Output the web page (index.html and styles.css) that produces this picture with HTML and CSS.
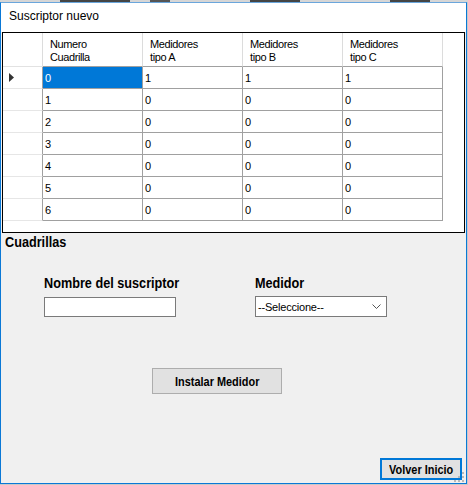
FILE: index.html
```html
<!DOCTYPE html>
<html lang="es">
<head>
<meta charset="utf-8">
<title>Suscriptor nuevo</title>
<link rel="stylesheet" href="styles.css">
</head>
<body>
<div class="topstrip"></div>
<div class="window">
  <div class="titlebar">Suscriptor nuevo</div>
  <div class="grid">
    <div class="dgv">
      <div class="hc corner"></div>
      <div class="hc">Numero<br>Cuadrilla</div>
      <div class="hc">Medidores<br>tipo A</div>
      <div class="hc">Medidores<br>tipo B</div>
      <div class="hc">Medidores<br>tipo C</div>

      <div class="rh"><svg class="arrow" width="6" height="9" viewBox="0 0 6 9"><polygon points="0,0 5,4.5 0,9" fill="#333"/></svg></div>
      <div class="c sel">0</div><div class="c">1</div><div class="c">1</div><div class="c">1</div>

      <div class="rh"></div>
      <div class="c">1</div><div class="c">0</div><div class="c">0</div><div class="c">0</div>

      <div class="rh"></div>
      <div class="c">2</div><div class="c">0</div><div class="c">0</div><div class="c">0</div>

      <div class="rh"></div>
      <div class="c">3</div><div class="c">0</div><div class="c">0</div><div class="c">0</div>

      <div class="rh"></div>
      <div class="c">4</div><div class="c">0</div><div class="c">0</div><div class="c">0</div>

      <div class="rh"></div>
      <div class="c">5</div><div class="c">0</div><div class="c">0</div><div class="c">0</div>

      <div class="rh"></div>
      <div class="c">6</div><div class="c">0</div><div class="c">0</div><div class="c">0</div>
    </div>
  </div>
  <div class="form">
    <div class="section-title"><span class="cond">Cuadrillas</span></div>
    <div class="fields">
      <div class="field">
        <div class="field-label"><span class="cond">Nombre del suscriptor</span></div>
        <div class="textbox"></div>
      </div>
      <div class="field">
        <div class="field-label"><span class="cond">Medidor</span></div>
        <div class="select">
          <span>--Seleccione--</span>
          <svg class="chev" width="9" height="6" viewBox="0 0 9 6"><polyline points="0.5,0.5 4.5,4.5 8.5,0.5" fill="none" stroke="#555" stroke-width="1"/></svg>
        </div>
      </div>
    </div>
    <div class="actions">
      <div class="btn install"><span class="cond-c">Instalar Medidor</span></div>
    </div>
    <div class="footer">
      <div class="btn volver"><span class="cond-c">Volver Inicio</span></div>
    </div>
    <svg class="grip" width="12" height="12" viewBox="0 0 12 12">
      <rect x="9" y="1" width="2" height="2" fill="#b8b8b8"/>
      <rect x="5" y="5" width="2" height="2" fill="#b8b8b8"/>
      <rect x="9" y="5" width="2" height="2" fill="#b8b8b8"/>
      <rect x="1" y="9" width="2" height="2" fill="#b8b8b8"/>
      <rect x="5" y="9" width="2" height="2" fill="#b8b8b8"/>
      <rect x="9" y="9" width="2" height="2" fill="#b8b8b8"/>
    </svg>
  </div>
</div>
</body>
</html>
```
FILE: styles.css
```css
* { box-sizing: border-box; }

html, body {
  margin: 0;
  padding: 0;
}

body {
  width: 468px;
  height: 485px;
  overflow: hidden;
  background: #c9c9c9;
}

.topstrip {
  height: 2px;
  background:
    linear-gradient(90deg, transparent 0 60px, #444 60px 130px, transparent 130px 150px, #555 150px 170px, transparent 170px 250px, #444 250px 300px, transparent 300px 390px, #444 390px 430px, transparent 430px),
    #d6d6d6;
}

.window {
  width: 467px;
  height: 482px;
  border: 1px solid #0a78d6;
  border-top-color: #6aa6dc;
  background: #f0f0f0;
  display: flex;
  flex-direction: column;
}

.titlebar {
  height: 29px;
  flex: none;
  background: #fff;
  padding: 0 0 2px 8px;
  font-family: "Liberation Sans", Arial, sans-serif;
  font-size: 12px;
  line-height: 27px;
  color: #000;
}

.grid {
  flex: none;
  margin-left: 1px;
  width: 463px;
  height: 201px;
  border: 1px solid #000;
  background: #fff;
}

.dgv {
  display: grid;
  grid-template-columns: 40px repeat(4, 100px);
  grid-template-rows: 34px repeat(7, 22px);
  font-family: "Liberation Sans", Arial, sans-serif;
  font-size: 11px;
  letter-spacing: -0.4px;
  color: #000;
}

.hc {
  background: #fff;
  border-right: 1px solid #dcdcdc;
  border-bottom: 1px solid #a0a0a0;
  padding: 5px 0 0 7px;
  line-height: 13px;
}

.hc.corner {
  border-bottom-color: #e2e2e2;
}

.rh {
  background: #fff;
  border-right: 1px solid #a0a0a0;
  border-bottom: 1px solid #e6e6e6;
  display: flex;
  align-items: center;
  padding-left: 6px;
}

.arrow { display: block; }

.c {
  border-right: 1px solid #a0a0a0;
  border-bottom: 1px solid #a0a0a0;
  padding: 1px 0 0 2px;
  line-height: 20px;
}

.c.sel {
  background: #0078d7;
  color: #fff;
}

.form {
  flex: 1;
  position: relative;
  display: flex;
  flex-direction: column;
  align-items: flex-start;
  padding: 1px 4px 3px 4px;
}

.section-title,
.field-label {
  font-family: "Liberation Sans", Arial, sans-serif;
  font-weight: bold;
  font-size: 15px;
  line-height: 16px;
  color: #000;
  white-space: nowrap;
}

.cond {
  display: inline-block;
  transform: scaleX(0.845);
  transform-origin: 0 50%;
}

.cond-c {
  display: inline-block;
  transform: scaleX(0.84);
  transform-origin: 50% 50%;
  white-space: nowrap;
}

.fields {
  display: grid;
  grid-template-columns: 211px 132px;
  margin: 25px 0 0 39px;
}

.textbox {
  margin-top: 6px;
  width: 132px;
  height: 20px;
  border: 1px solid #7a7a7a;
  background: #fff;
}

.select {
  margin-top: 5px;
  width: 132px;
  height: 21px;
  border: 1px solid #7a7a7a;
  background: #fff;
  display: flex;
  align-items: center;
  justify-content: space-between;
  padding: 0 5px 0 2px;
  font-family: "Liberation Sans", Arial, sans-serif;
  font-size: 11px;
  letter-spacing: -0.2px;
  color: #000;
}

.chev { display: block; }

.actions {
  margin: 51px 0 0 147px;
}

.btn {
  display: flex;
  align-items: center;
  justify-content: center;
  background: #e1e1e1;
  font-family: "Liberation Sans", Arial, sans-serif;
  font-weight: bold;
  color: #000;
}

.install {
  width: 130px;
  height: 26px;
  border: 1px solid #adadad;
  font-size: 13px;
}

.footer {
  margin-top: auto;
  align-self: stretch;
  display: flex;
  justify-content: flex-end;
}

.volver {
  width: 82px;
  height: 22px;
  border: 2px solid #0078d7;
  font-size: 13px;
}

.grip {
  position: absolute;
  right: 1px;
  bottom: 0;
}
```
